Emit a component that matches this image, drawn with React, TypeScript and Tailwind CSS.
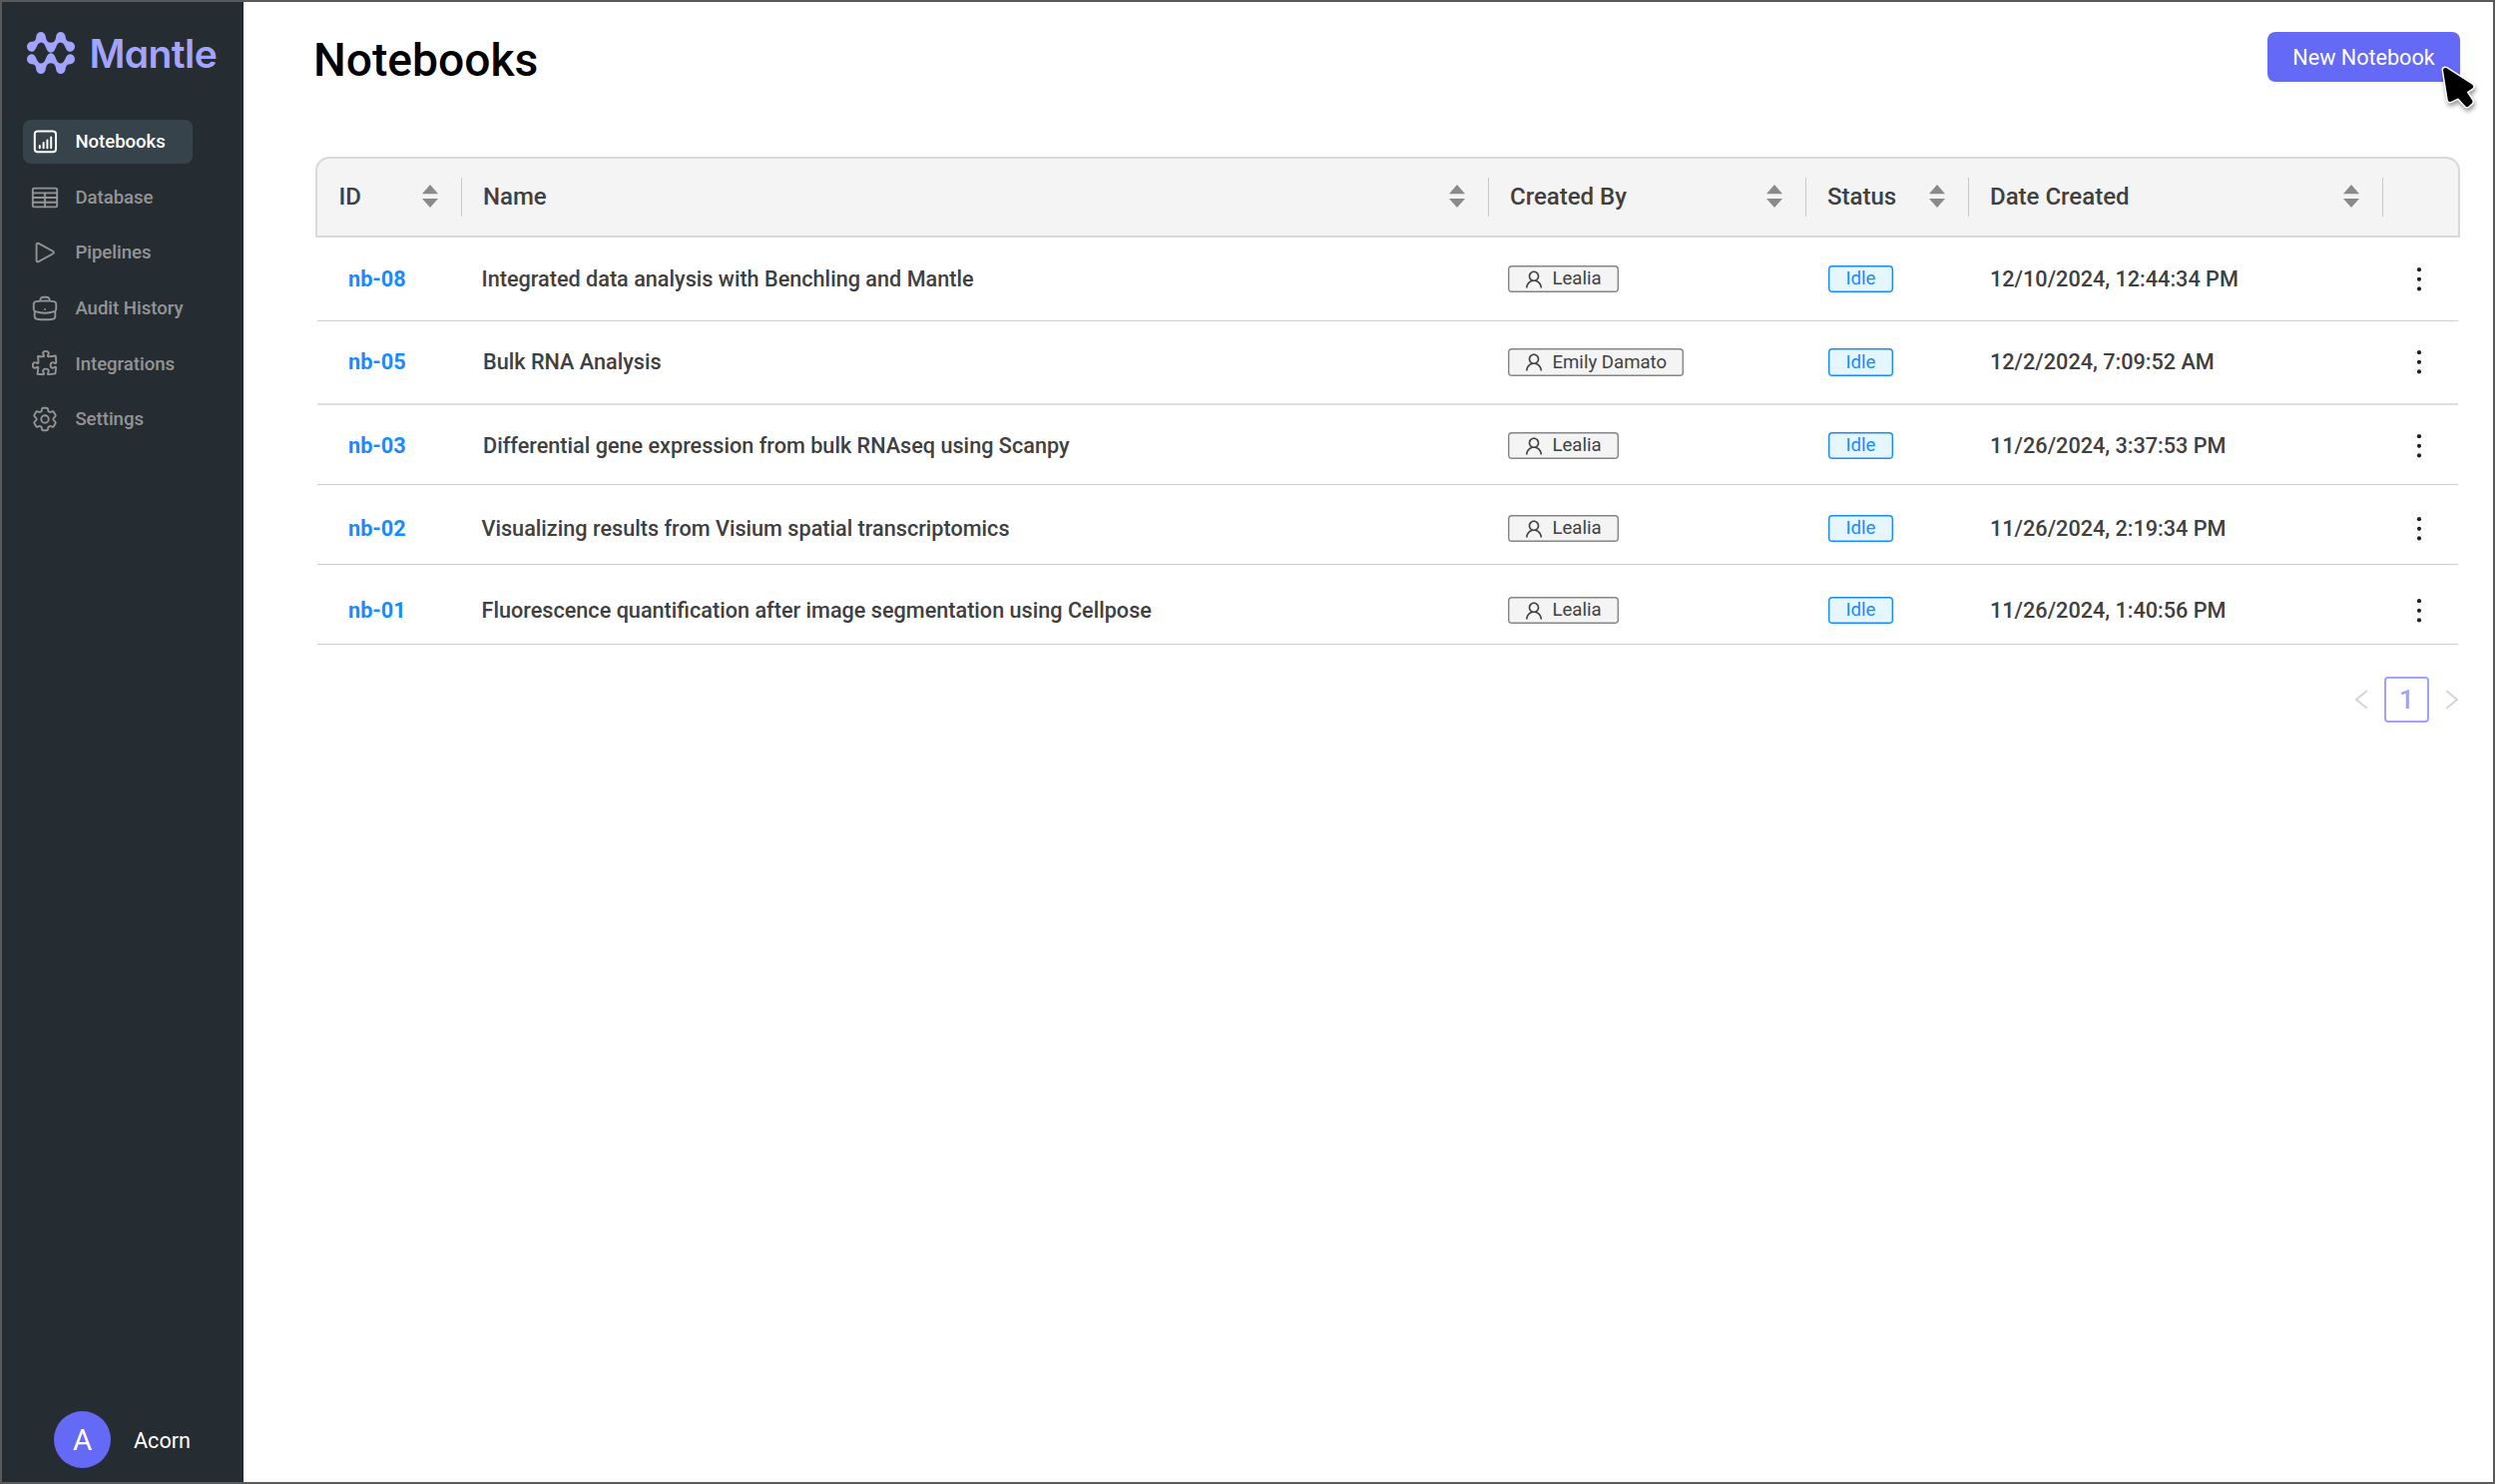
import React, { useState } from 'react';
import { AiOutlineUser } from 'react-icons/ai';
import {
  HiOutlineBriefcase,
  HiOutlineCog6Tooth,
  HiOutlinePlay,
  HiOutlinePuzzlePiece,
  HiOutlineTableCells,
} from 'react-icons/hi2';

interface Notebook {
  id: string;
  name: string;
  createdBy: string;
  status: string;
  date: string;
  rowClass: string;
  nameClass: string;
}

const notebooks: Notebook[] = [
  { id: 'nb-08', name: 'Integrated data analysis with Benchling and Mantle', createdBy: 'Lealia', status: 'Idle', date: '12/10/2024, 12:44:34 PM', rowClass: 'h-[84px] border-b border-[#cfcfcf]', nameClass: 'pl-[20px]' },
  { id: 'nb-05', name: 'Bulk RNA Analysis', createdBy: 'Emily Damato', status: 'Idle', date: '12/2/2024, 7:09:52 AM', rowClass: 'h-[84px] border-b-2 border-[#dedede]', nameClass: 'pl-[21.5px]' },
  { id: 'nb-03', name: 'Differential gene expression from bulk RNAseq using Scanpy', createdBy: 'Lealia', status: 'Idle', date: '11/26/2024, 3:37:53 PM', rowClass: 'h-[80px] pt-[2px] border-b border-[#cfcfcf]', nameClass: 'pl-[21.5px]' },
  { id: 'nb-02', name: 'Visualizing results from Visium spatial transcriptomics', createdBy: 'Lealia', status: 'Idle', date: '11/26/2024, 2:19:34 PM', rowClass: 'h-[80px] pt-[8px] border-b border-[#cfcfcf]', nameClass: 'pl-[20px]' },
  { id: 'nb-01', name: 'Fluorescence quantification after image segmentation using Cellpose', createdBy: 'Lealia', status: 'Idle', date: '11/26/2024, 1:40:56 PM', rowClass: 'h-[80px] pt-[12px] border-b border-[#cfcfcf]', nameClass: 'pl-[20px]' },
];

const columns = ['ID', 'Name', 'Created By', 'Status', 'Date Created'];

const App: React.FC = () => {
  const [view, setView] = useState('notebooks');

  return (
    <div className="relative flex w-[2500px] h-[1487px] border-2 border-[#5a5a5a] bg-white overflow-hidden font-['Roboto',sans-serif]">
      <aside className="w-[242px] shrink-0 bg-[#262d32] flex flex-col">
        <div className="flex items-center h-[102px] pl-[25px]">
          <Logo />
          <span className="ml-[14.5px] pt-px font-['Inter',sans-serif] font-semibold text-[39px] leading-none tracking-[-0.6px] text-[#a2a4ff] [font-feature-settings:'cv11']">Mantle</span>
        </div>
        <nav className="mt-[16.2px] pl-[21px] flex flex-col gap-[12.1px] items-start">
          <SidebarItem active={view === 'notebooks'} onClick={() => setView('notebooks')} icon={<ChartIcon />} label="Notebooks" />
          <SidebarItem active={view === 'database'} onClick={() => setView('database')} icon={<HiOutlineTableCells size={30} />} label="Database" />
          <SidebarItem active={view === 'pipelines'} onClick={() => setView('pipelines')} icon={<HiOutlinePlay size={30} />} label="Pipelines" />
          <SidebarItem active={view === 'audit'} onClick={() => setView('audit')} icon={<HiOutlineBriefcase size={30} />} label="Audit History" />
          <SidebarItem active={view === 'integrations'} onClick={() => setView('integrations')} icon={<HiOutlinePuzzlePiece size={30} />} label="Integrations" />
          <SidebarItem active={view === 'settings'} onClick={() => setView('settings')} icon={<HiOutlineCog6Tooth size={30} />} label="Settings" />
        </nav>
        <div className="mt-auto pl-[52px] pb-[14px] flex items-center gap-[23px] text-white">
          <div className="w-[57px] h-[57px] pt-px rounded-full bg-[#646af6] flex items-center justify-center text-[29.5px]">A</div>
          <span className="pt-[3px] text-[21.6px]">Acorn</span>
        </div>
      </aside>

      <main className="flex-1 pl-[72px] pr-[33px] pt-[30px] flex flex-col">
        <header className="flex justify-between items-start h-[125px]">
          <h1 className="-ml-[2px] mt-[1px] text-[46.2px] leading-[54px] font-medium text-black">Notebooks</h1>
          <button className="w-[193px] h-[50px] pt-[2px] rounded-lg bg-[#646af6] text-white text-[21.6px] leading-none shadow-[0_2px_0_rgba(0,0,0,0.04)]">New Notebook</button>
        </header>

        <div className="w-[2149px]">
          <div className="grid grid-cols-[144.5px_1029px_318px_163px_415px_75px] items-center h-[81px] rounded-t-[14px] border-2 border-[#d9d9d9] bg-[#f4f4f4]">
            {columns.map((label) => (
              <div key={label} className="h-[39px] pl-[21.5px] pr-[22.5px] pb-[2px] border-r border-[#c8c8c8] flex items-center justify-between">
                <span className="text-[24px] font-medium text-[#404040]">{label}</span>
                <SortIcon />
              </div>
            ))}
          </div>

          {notebooks.map((nb) => (
            <div key={nb.id} className={`grid grid-cols-[144.5px_1029px_318px_163px_415px_75px] items-center ml-[2px] w-[2145px] text-[21.65px] font-medium text-[#404040] ${nb.rowClass}`}>
              <a className="pt-px pl-[31px] font-bold text-[#178cff]">{nb.id}</a>
              <span className={`pt-px ${nb.nameClass}`}>{nb.name}</span>
              <div className="pl-[19.5px] flex">
                <span className="h-[27.5px] pl-[15px] pr-[17px] rounded-[4px] bg-[#f4f4f4] shadow-[inset_0_0_0_1.4px_#858585] flex items-center gap-[7.5px] text-[18.6px] font-normal">
                  <AiOutlineUser size={22} />
                  <span className="pt-[1.5px]">{nb.createdBy}</span>
                </span>
              </div>
              <div className="pl-[22.5px] flex">
                <span className="w-[65px] h-[27.5px] pt-[1.5px] rounded-[4px] bg-[#e6f6ff] shadow-[inset_0_0_0_1.4px_#178cff] flex items-center justify-center text-[18.6px] font-normal text-[#178cff]">{nb.status}</span>
              </div>
              <span className="pt-px pl-[21.5px]">{nb.date}</span>
              <button className="flex justify-center pr-[2px]">
                <MoreIcon />
              </button>
            </div>
          ))}
        </div>

        <div className="mt-[32px] pr-[2px] flex items-center justify-end gap-[17px]">
          <svg width="12" height="20" viewBox="0 0 12 20" fill="none" stroke="#d4d4d4" strokeWidth="1.9"><path d="M11.7 1.2 1 10l10.7 8.8" /></svg>
          <span className="w-[45px] h-[46px] rounded-[4px] border-2 border-[#a0a2ff] flex items-center justify-center text-[26px] font-medium text-[#a0a2ff]">1</span>
          <svg width="12" height="20" viewBox="0 0 12 20" fill="none" stroke="#d4d4d4" strokeWidth="1.9"><path d="M.3 1.2 11 10 .3 18.8" /></svg>
        </div>
      </main>

      <Cursor />
    </div>
  );
};

const SidebarItem: React.FC<{ active: boolean; onClick: () => void; icon: React.ReactNode; label: string }> = ({ active, onClick, icon, label }) => (
  <button
    onClick={onClick}
    className={`w-[170px] h-[43.5px] pl-[7px] flex items-center gap-[15.4px] rounded-lg text-[18.55px] font-medium whitespace-nowrap ${
      active ? 'bg-[#37434a] text-white' : 'text-[#949494]'
    }`}
  >
    {icon}
    <span className="pt-px leading-none">{label}</span>
  </button>
);

const Logo: React.FC = () => (
  <svg width="48" height="42" viewBox="27 32.2 48 42" fill="#a2a4ff">
    <path id="wave" d="M27 47C27 44.2 29.2 42 32 42C36 42 36 38.5 36.3 36.5C36.8 34 38.6 32.3 41 32.3C43.4 32.3 45.2 34 45.7 36.5C46.3 40 47 43 51 43C55 43 55.7 40 56.2 36.5C56.6 34 58.4 32.3 60.8 32.3C63.2 32.3 65 34 65.5 36.5C65.9 39 66.5 42 70 42C72.8 42 75 44.2 75 47C75 49.8 72.8 52 70 52C64.8 52 66 42.7 60.5 42.7C55.5 42.7 56.5 53 51 53C45.5 53 46.5 42.7 41.3 42.7C36 42.7 37 52 32 52C29.2 52 27 49.8 27 47Z" />
    <use href="#wave" transform="translate(0 106.4) scale(1 -1)" />
  </svg>
);

const ChartIcon: React.FC = () => (
  <svg width="30" height="30" viewBox="0 0 30 30" fill="none" stroke="currentColor" strokeWidth="2" strokeLinecap="round">
    <rect x="4.8" y="4.6" width="21.2" height="20.6" rx="3" />
    <path d="M9.8 19v2.2M13.6 16v5.2M17.4 13.4v7.8M21.2 10.6v10.6" strokeWidth="2" />
  </svg>
);

const SortIcon: React.FC = () => (
  <svg width="16" height="23" viewBox="0 0 16 23" fill="#8a8a8a">
    <path d="M8 0 16 9.2H0zM0 14h16l-8 9z" />
  </svg>
);

const MoreIcon: React.FC = () => (
  <svg width="6" height="26" viewBox="0 0 6 26" fill="#1f1f1f">
    <circle cx="3" cy="3.2" r="2.1" />
    <circle cx="3" cy="12.8" r="2.1" />
    <circle cx="3" cy="22.4" r="2.1" />
  </svg>
);

const Cursor: React.FC = () => (
  <svg className="absolute left-[2438px] top-[58px] drop-shadow-[1px_3px_2px_rgba(0,0,0,0.4)]" width="48" height="54" viewBox="0 0 48 54" strokeLinejoin="round">
    <path d="M10.3 10.2 36 26.7 28.7 31.7 35.3 41.8 32 44.7 23.7 35.7 15 39.7z" fill="#fff" stroke="#fff" strokeWidth="7.5" />
    <path d="M10.3 10.2 36 26.7 28.7 31.7 35.3 41.8 32 44.7 23.7 35.7 15 39.7z" fill="#000" stroke="#000" strokeWidth="4.5" />
  </svg>
);

export default App;
